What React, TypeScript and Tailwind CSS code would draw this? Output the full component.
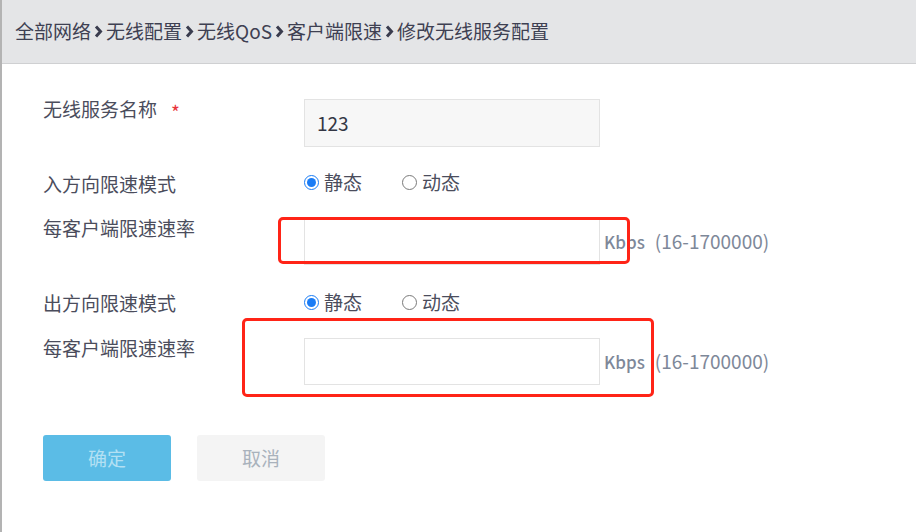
import React from 'react';

const font = { fontFamily: '"Noto Sans CJK SC", "Noto Sans", sans-serif' };

function Chevron() {
  return (
    <svg width="9" height="13" viewBox="0 0 9 13" className="mx-[3px] shrink-0">
      <polyline points="2,1.5 6.5,6.5 2,11.5" fill="none" stroke="#3a3c4e" strokeWidth="3" />
    </svg>
  );
}

function Radio({ checked, label }: { checked?: boolean; label: string }) {
  return (
    <label className="flex items-center">
      {checked ? (
        <span className="w-[15px] h-[15px] rounded-full border-[1.5px] border-[#1a7cf5] flex items-center justify-center">
          <span className="w-[9px] h-[9px] rounded-full bg-[#1a7cf5]" />
        </span>
      ) : (
        <span className="w-[15px] h-[15px] rounded-full border-[1.5px] border-[#7a7a7a]" />
      )}
      <span className="ml-[5px] text-[19px] leading-[20px] text-[#4b4d5c]">{label}</span>
    </label>
  );
}

function RateRow({ mt }: { mt: string }) {
  return (
    <div className={`flex ${mt}`}>
      <div className="w-[261px] text-[19px] leading-[20px] text-[#4b4d5c]">每客户端限速速率</div>
      <div className="flex items-center">
        <div className="w-[296px] h-[47px] border border-[#e3e3e3] bg-white" />
        <span className="ml-[4px] text-[17px] font-medium text-[#7e8899]">Kbps</span>
        <span className="ml-[10px] text-[19px] text-[#7e8899]">(16-1700000)</span>
      </div>
    </div>
  );
}

export default function App() {
  return (
    <div className="relative w-[916px] h-[532px] bg-white border-l-2 border-[#b3b3b3] overflow-hidden" style={font}>
      <div className="h-[64px] bg-[#e4e5e7] border-b border-[#cfd0d2] flex items-center pl-[13px] text-[19px] text-[#3e4052]">
        <span>全部网络</span>
        <Chevron />
        <span>无线配置</span>
        <Chevron />
        <span>无线QoS</span>
        <Chevron />
        <span>客户端限速</span>
        <Chevron />
        <span>修改无线服务配置</span>
      </div>

      <div className="pl-[41px]">
        <div className="flex mt-[35px]">
          <div className="w-[261px] flex text-[19px] leading-[20px] text-[#4b4d5c]">
            <span>无线服务名称</span>
            <span className="ml-[14px] mt-[3px] text-[#e8343a]">*</span>
          </div>
          <div className="w-[296px] h-[48px] border border-[#e3e3e3] bg-[#f7f7f7] flex items-center pl-[12px] text-[19px] text-[#333644]">
            123
          </div>
        </div>

        <div className="flex mt-[20px] h-[30px] items-center">
          <div className="w-[261px] text-[19px] leading-[20px] text-[#4b4d5c] mt-[4px]">入方向限速模式</div>
          <div className="flex gap-[40px]">
            <Radio checked label="静态" />
            <Radio label="动态" />
          </div>
        </div>

        <RateRow mt="mt-[21px]" />

        <div className="flex mt-[22px] h-[30px] items-center">
          <div className="w-[261px] text-[19px] leading-[20px] text-[#4b4d5c] mt-[2px]">出方向限速模式</div>
          <div className="flex gap-[40px]">
            <Radio checked label="静态" />
            <Radio label="动态" />
          </div>
        </div>

        <RateRow mt="mt-[21px]" />

        <div className="flex gap-[26px] mt-[50px]">
          <button className="w-[128px] h-[46px] rounded-[3px] bg-[#5bbce6] text-[19px] text-[#b3e0f3]">确定</button>
          <button className="w-[128px] h-[46px] rounded-[3px] bg-[#f4f4f4] text-[19px] text-[#a9b2bc]">取消</button>
        </div>
      </div>

      <div className="absolute left-[276px] top-[217px] w-[352px] h-[47px] border-[3px] border-[#ff2417] rounded-[5px]" />
      <div className="absolute left-[240px] top-[318px] w-[412px] h-[79px] border-[3px] border-[#ff2417] rounded-[5px]" />
    </div>
  );
}
